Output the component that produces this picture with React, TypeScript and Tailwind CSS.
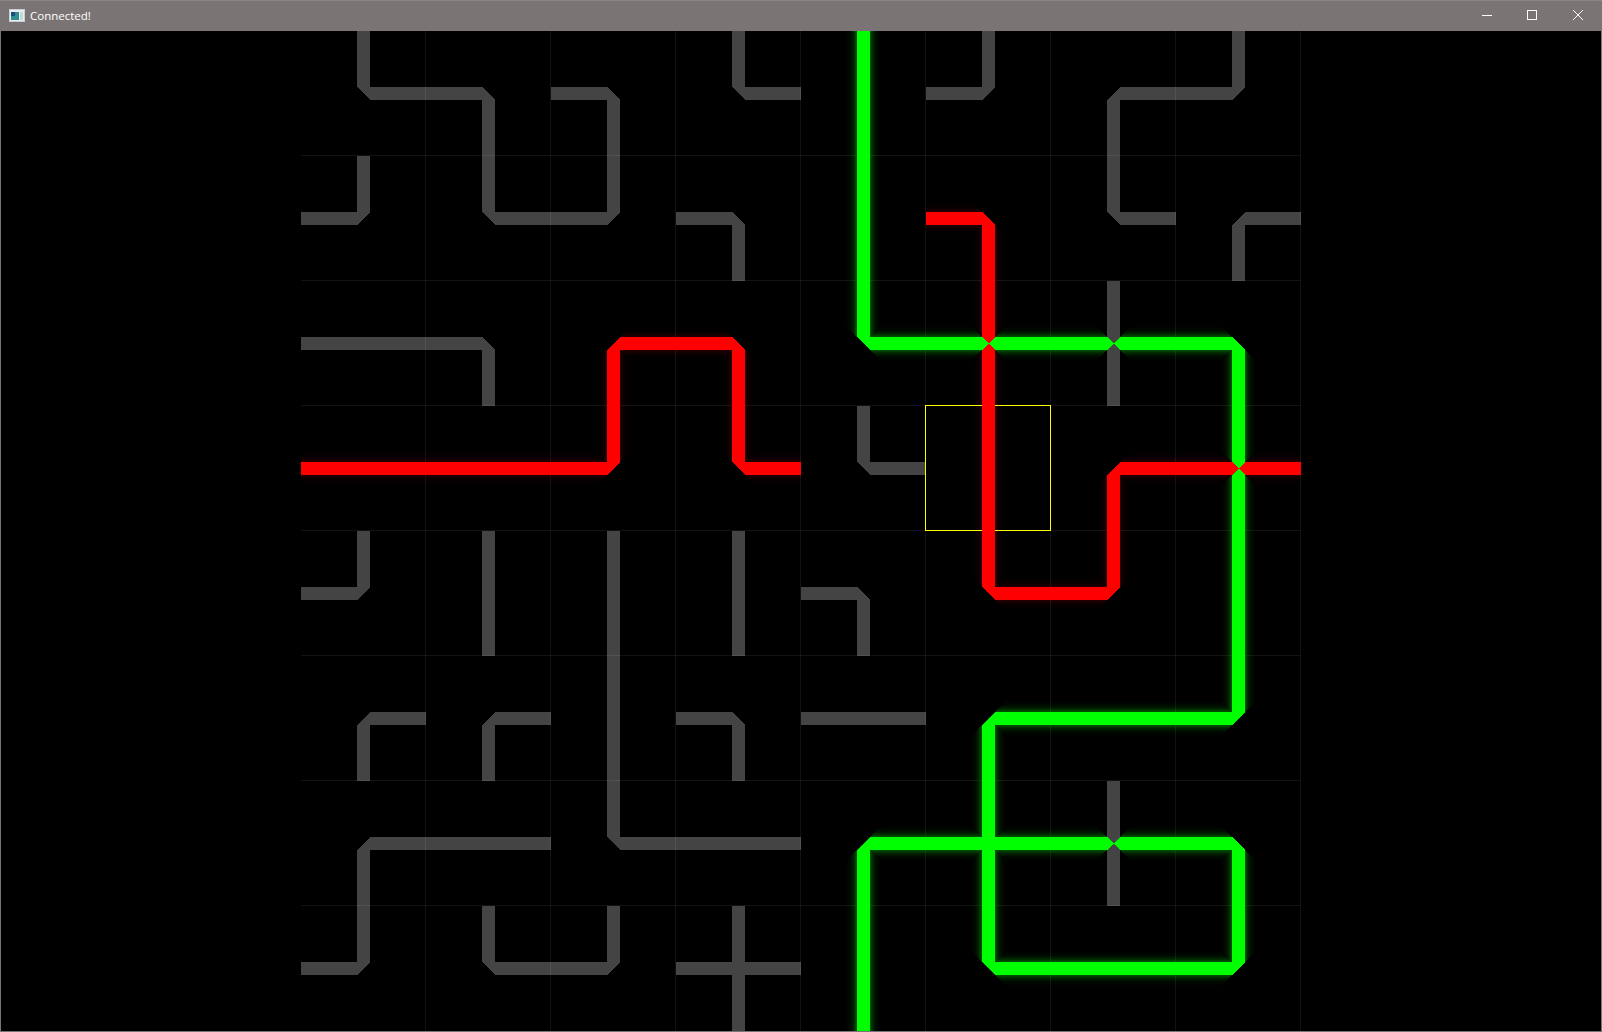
import type { ReactNode } from 'react';

type Dir = 'N' | 'E' | 'S' | 'W';

const COLORS: Record<string, string> = { k: '#444444', r: '#ff0000', g: '#00ff00' };

// one string per cell, "colour:arms" separated by spaces
const BOARD: string[][] = [
  ['k:NE', 'k:WS', 'k:WS', 'k:NE', 'g:NS', 'k:WN', 'k:SE', 'k:WN'],
  ['k:WN', 'k:NE', 'k:WN', 'k:WS', 'g:NS', 'r:WS', 'k:NE', 'k:SE'],
  ['k:WE', 'k:WS', 'r:SE', 'r:WS', 'g:NE', 'r:NS g:WE', 'k:NS g:WE', 'g:WS'],
  ['r:WE', 'r:WE', 'r:WN', 'r:NE', 'k:NE', 'r:NS', 'r:SE', 'r:WE g:NS'],
  ['k:WN', 'k:NS', 'k:NS', 'k:NS', 'k:WS', 'r:NE', 'r:WN', 'g:NS'],
  ['k:SE', 'k:SE', 'k:NS', 'k:WS', 'k:WE', 'g:SE', 'g:WE', 'g:WN'],
  ['k:SE', 'k:WE', 'k:NE', 'k:WE', 'g:SE', 'g:NSWE', 'k:NS g:WE', 'g:WS'],
  ['k:WN', 'k:NE', 'k:WN', 'k:NSWE', 'g:NS', 'g:NE', 'g:WE', 'g:WN'],
];

const LEFT = 301;
const TOP = 31;
const CELL = 125;
const HALF = 6.5;
const GLOW = 11;

function armPoints(cx: number, cy: number, dir: Dir, w: number) {
  const r = CELL / 2;
  switch (dir) {
    case 'N': return `${cx - w},${cy - r} ${cx + w},${cy - r} ${cx + w},${cy - w} ${cx},${cy} ${cx - w},${cy - w}`;
    case 'S': return `${cx - w},${cy + r} ${cx + w},${cy + r} ${cx + w},${cy + w} ${cx},${cy} ${cx - w},${cy + w}`;
    case 'W': return `${cx - r},${cy - w} ${cx - r},${cy + w} ${cx - w},${cy + w} ${cx},${cy} ${cx - w},${cy - w}`;
    case 'E': return `${cx + r},${cy - w} ${cx + r},${cy + w} ${cx + w},${cy + w} ${cx},${cy} ${cx + w},${cy - w}`;
  }
}

function straightPoints(cx: number, cy: number, vertical: boolean, w: number) {
  const r = CELL / 2;
  const dx = vertical ? w : r;
  const dy = vertical ? r : w;
  return `${cx - dx},${cy - dy} ${cx + dx},${cy - dy} ${cx + dx},${cy + dy} ${cx - dx},${cy + dy}`;
}

function GlowStops({ color, peak }: { color: string; peak: number }) {
  const edge = GLOW / (HALF + GLOW) / 2;
  return (
    <>
      <stop offset={0} stopColor={color} stopOpacity={0} />
      <stop offset={edge * 0.4} stopColor={color} stopOpacity={peak * 0.13} />
      <stop offset={edge * 0.7} stopColor={color} stopOpacity={peak * 0.42} />
      <stop offset={edge} stopColor={color} stopOpacity={peak} />
      <stop offset={1 - edge} stopColor={color} stopOpacity={peak} />
      <stop offset={1 - edge * 0.7} stopColor={color} stopOpacity={peak * 0.42} />
      <stop offset={1 - edge * 0.4} stopColor={color} stopOpacity={peak * 0.13} />
      <stop offset={1} stopColor={color} stopOpacity={0} />
    </>
  );
}

function Board() {
  const gray: ReactNode[] = [];
  const glow: ReactNode[] = [];
  const lit: ReactNode[] = [];

  BOARD.forEach((row, r) => {
    row.forEach((cell, c) => {
      const cx = LEFT + CELL * c + CELL / 2;
      const cy = TOP + CELL * r + CELL / 2;
      const parts = cell.split(' ');
      parts.forEach((part) => {
        const [color, arms] = part.split(':');
        // a lone straight wire has no point in the middle of its cell
        const straight = parts.length === 1 && (arms === 'NS' || arms === 'WE');
        const shapes = straight
          ? [{ key: arms, axis: arms === 'NS' ? 'v' : 'h', wire: straightPoints(cx, cy, arms === 'NS', HALF), halo: straightPoints(cx, cy, arms === 'NS', HALF + GLOW) }]
          : (arms.split('') as Dir[]).map((dir) => ({
              key: dir,
              axis: dir === 'N' || dir === 'S' ? 'v' : 'h',
              wire: armPoints(cx, cy, dir, HALF),
              halo: armPoints(cx, cy, dir, HALF + GLOW),
            }));
        shapes.forEach((s) => {
          const key = `${r}-${c}-${s.key}`;
          const wire = <polygon key={key} points={s.wire} fill={COLORS[color]} shapeRendering="crispEdges" />;
          if (color === 'k') {
            gray.push(wire);
          } else {
            glow.push(<polygon key={key} points={s.halo} fill={`url(#glow-${color}-${s.axis})`} />);
            lit.push(wire);
          }
        });
      });
    });
  });

  const lines = [1, 2, 3, 4, 5, 6, 7, 8];

  return (
    <svg className="block w-full h-full" viewBox="1 31 1600 1000">
      <defs>
        <linearGradient id="glow-g-v" x1="0" x2="1" y1="0" y2="0"><GlowStops color="#00ff00" peak={0.33} /></linearGradient>
        <linearGradient id="glow-g-h" x1="0" x2="0" y1="0" y2="1"><GlowStops color="#00ff00" peak={0.33} /></linearGradient>
        <linearGradient id="glow-r-v" x1="0" x2="1" y1="0" y2="0"><GlowStops color="#ff0000" peak={0.14} /></linearGradient>
        <linearGradient id="glow-r-h" x1="0" x2="0" y1="0" y2="1"><GlowStops color="#ff0000" peak={0.14} /></linearGradient>
      </defs>
      {gray}
      {lines.map((i) => (
        <g key={i} stroke="#ffffff" strokeOpacity={0.07} shapeRendering="crispEdges">
          <line x1={LEFT - 1 + CELL * i + 0.5} x2={LEFT - 1 + CELL * i + 0.5} y1={TOP} y2={1031} />
          {i < 8 && <line x1={LEFT} x2={1301} y1={TOP - 1 + CELL * i + 0.5} y2={TOP - 1 + CELL * i + 0.5} />}
        </g>
      ))}
      {glow}
      <rect x={925.5} y={405.5} width={125} height={125} fill="none" stroke="#ffff00" strokeWidth={1} shapeRendering="crispEdges" />
      {lit}
    </svg>
  );
}

export default function App() {
  return (
    <div className="w-[1602px] h-[1032px] flex flex-col bg-[#7a7574] overflow-hidden">
      <div className="h-[31px] flex items-center justify-between border-t border-[#8a8584] text-white">
        <div className="flex items-center pl-[9px]">
          <svg className="w-[16px] h-[13px] mb-[2px]" viewBox="0 0 16 13">
            <rect x="0.5" y="0.5" width="15" height="12" fill="#e8eef2" stroke="#c9d0d4" />
            <rect x="2" y="3" width="8" height="8" fill="#2f8f8f" />
            <rect x="2" y="3" width="4" height="4" fill="#1d4f7c" />
            <rect x="11" y="3" width="3" height="8" fill="#c4dccd" />
          </svg>
          <span className="ml-[5px] text-[11.5px] font-['Open_Sans',sans-serif]">Connected!</span>
        </div>
        <div className="flex items-center h-full pr-[1px] pb-[2px]">
          <div className="w-[45px] flex justify-center">
            <svg className="w-[12px] h-[12px]" viewBox="0 0 12 12" fill="none" stroke="#fff"><path d="M1 6.5h10" /></svg>
          </div>
          <div className="w-[45px] mr-[1px] flex justify-center">
            <svg className="w-[12px] h-[12px]" viewBox="0 0 12 12" fill="none" stroke="#fff"><rect x="1.5" y="1.5" width="9" height="9" /></svg>
          </div>
          <div className="w-[46px] flex justify-center">
            <svg className="w-[12px] h-[12px]" viewBox="0 0 12 12" fill="none" stroke="#fff"><path d="M1 1l10 10M11 1L1 11" /></svg>
          </div>
        </div>
      </div>
      <div className="w-[1600px] h-[1000px] mx-[1px] bg-black">
        <Board />
      </div>
    </div>
  );
}
